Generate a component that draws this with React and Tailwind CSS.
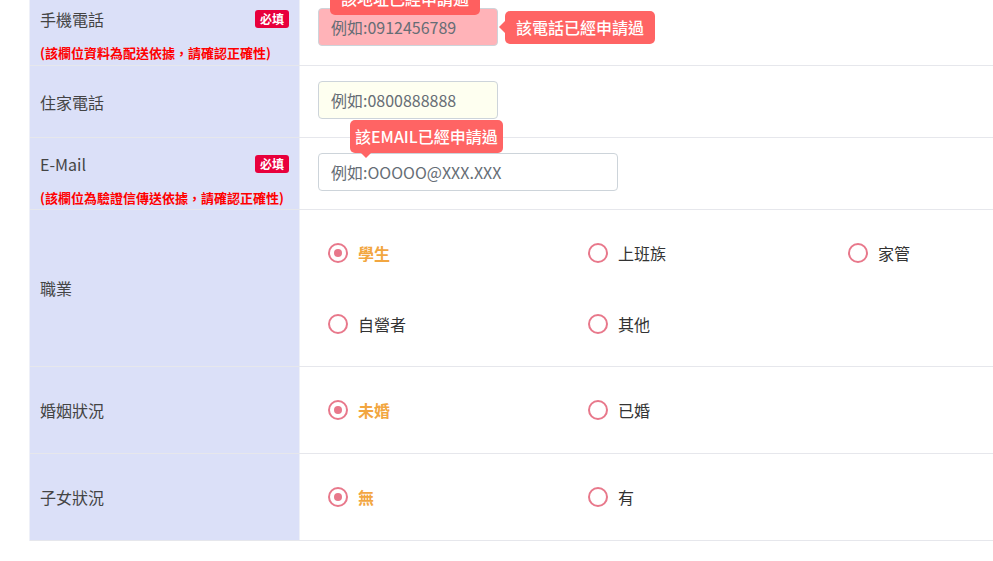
import React from 'react';

const font = { fontFamily: '"Noto Sans CJK TC", "Noto Sans", sans-serif' };

const Badge = () => (
  <span className="rounded-[3px] bg-[#e8003c] px-[5px] text-[12px] font-bold leading-[18px] text-white">必填</span>
);

const Radio = ({ label, checked }) => (
  <label className="flex items-center gap-[10px]">
    <span className="flex h-[20px] w-[20px] items-center justify-center rounded-full border-2 border-[#e8788b]">
      {checked && <span className="h-[8px] w-[8px] rounded-full bg-[#e8788b]" />}
    </span>
    <span className={checked ? 'text-[16px] font-bold text-[#f2a640]' : 'text-[16px] text-[#333]'}>{label}</span>
  </label>
);

const Row = ({ label, badge, note, children, className = '', labelClass = '' }) => (
  <div className={`grid grid-cols-[270px_1fr] border-b border-[#e6e7ec] ${className}`}>
    <div className={`border-r border-[#eef0f8] bg-[#dbe0f8] pl-[10px] pr-[10px] ${labelClass}`}>
      <div className="flex items-center justify-between">
        <span className="text-[16px] leading-[22px] text-[#444]">{label}</span>
        {badge && <Badge />}
      </div>
      {note && <p className="mt-[14px] text-[13px] font-bold leading-[18px] whitespace-nowrap text-[#f00]">{note}</p>}
    </div>
    <div className="relative">{children}</div>
  </div>
);

export default function App() {
  return (
    <div className="min-h-[561px] overflow-hidden bg-white" style={font}>
      <div className="-mt-[7px] ml-[29px] border-l border-[#eef0f8]">
        <Row label="手機電話" badge note="(該欄位資料為配送依據，請確認正確性)" className="h-[73px]" labelClass="pt-[15px]">
          <div className="pl-[18px] pt-[15px]">
            <div className="relative w-[180px]">
              <div className="absolute bottom-[31px] left-[12px] rounded-[5px] bg-[#ff5f5f] px-[11px] py-[5px] text-[16px] font-medium leading-[23px] whitespace-nowrap text-white">
                該地址已經申請過
              </div>
              <input
                readOnly
                placeholder="例如:0912456789"
                className="h-[38px] w-[180px] rounded-[4px] border border-[#cdd4da] bg-[#ffb3b8] px-[12px] text-[16px] text-[#666d75] placeholder:text-[#666d75] outline-none"
              />
            </div>
          </div>
          <div className="absolute left-[205px] top-[18px] rounded-[5px] bg-[#ff6464] px-[11px] py-[5px] text-[16px] font-medium leading-[23px] whitespace-nowrap text-white">
            <span className="absolute -left-[6px] top-[10px] h-0 w-0 border-y-[6px] border-r-[6px] border-y-transparent border-r-[#ff6464]" />
            該電話已經申請過
          </div>
        </Row>

        <Row label="住家電話" className="h-[72px]" labelClass="flex flex-col justify-center">
          <div className="pl-[18px] pt-[15px]">
            <input
              readOnly
              placeholder="例如:0800888888"
              className="h-[38px] w-[180px] rounded-[4px] border border-[#cdd4da] bg-[#fefff0] px-[12px] text-[16px] text-[#666d75] placeholder:text-[#666d75] outline-none"
            />
          </div>
        </Row>

        <Row label="E-Mail" badge note="(該欄位為驗證信傳送依據，請確認正確性)" className="h-[72px]" labelClass="pt-[15px]">
          <div className="relative pl-[18px] pt-[15px]">
            <div className="absolute left-[50px] -top-[18px] rounded-[5px] bg-[#ff6464] px-[5px] py-[5px] text-[16px] font-medium leading-[23px] whitespace-nowrap text-white">
              該EMAIL已經申請過
              <span className="absolute left-[10px] -bottom-[5px] h-0 w-0 border-x-[6px] border-t-[6px] border-x-transparent border-t-[#ff6464]" />
            </div>
            <input
              readOnly
              placeholder="例如:OOOOO@XXX.XXX"
              className="h-[38px] w-[300px] rounded-[4px] border border-[#cdd4da] bg-white px-[12px] text-[16px] text-[#666d75] placeholder:text-[#666d75] outline-none"
            />
          </div>
        </Row>

        <Row label="職業" className="h-[157px]" labelClass="flex flex-col justify-center">
          <div className="grid h-full grid-cols-[260px_260px_1fr] content-center gap-y-[47px] pl-[28px]">
            <Radio label="學生" checked />
            <Radio label="上班族" />
            <Radio label="家管" />
            <Radio label="自營者" />
            <Radio label="其他" />
          </div>
        </Row>

        <Row label="婚姻狀況" className="h-[87px]" labelClass="flex flex-col justify-center">
          <div className="grid h-full grid-cols-[260px_1fr] content-center pl-[28px]">
            <Radio label="未婚" checked />
            <Radio label="已婚" />
          </div>
        </Row>

        <Row label="子女狀況" className="h-[87px]" labelClass="flex flex-col justify-center">
          <div className="grid h-full grid-cols-[260px_1fr] content-center pl-[28px]">
            <Radio label="無" checked />
            <Radio label="有" />
          </div>
        </Row>
      </div>
    </div>
  );
}
